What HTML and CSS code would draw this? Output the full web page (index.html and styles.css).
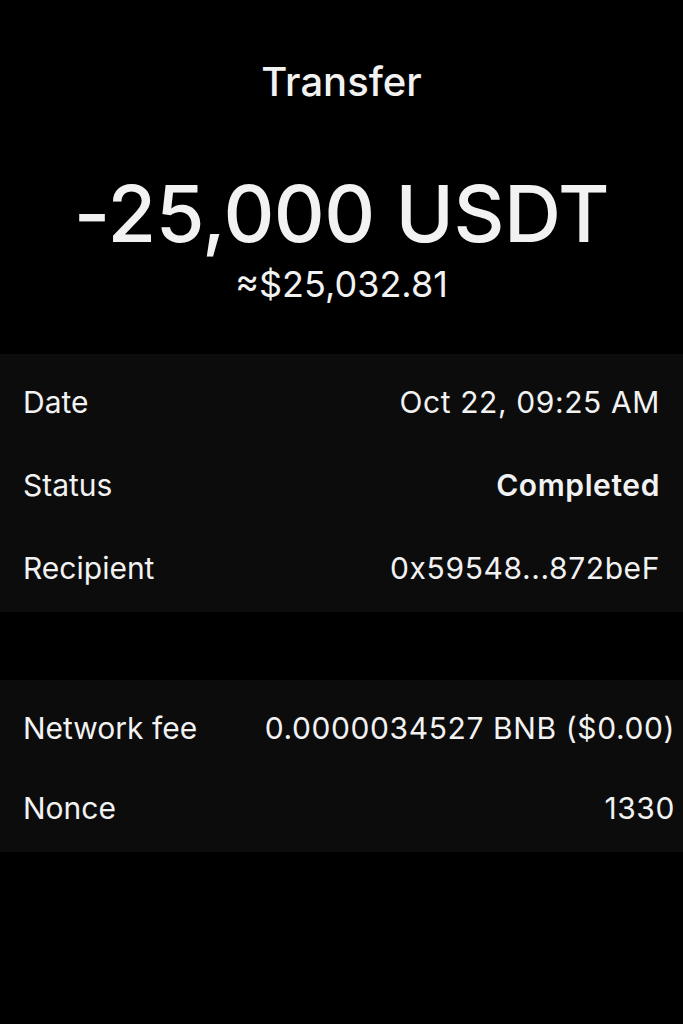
FILE: index.html
```html
<!DOCTYPE html>
<html lang="en">
<head>
    <meta charset="UTF-8">
    <meta name="viewport" content="width=device-width, initial-scale=1.0">
    <title>Transfer</title>
    <link rel="stylesheet" href="styles.css">
</head>
<body>
    <div class="header">
        <h1>Transfer</h1>
        <div class="amount">-25,000 USDT</div>
        <div class="fiat">≈$25,032.81</div>
    </div>

    <div class="card card-main">
        <div class="row">
            <span class="label">Date</span>
            <span class="value">Oct 22, 09:25 AM</span>
        </div>
        <div class="row">
            <span class="label">Status</span>
            <span class="value strong">Completed</span>
        </div>
        <div class="row">
            <span class="label">Recipient</span>
            <span class="value">0x59548...872beF</span>
        </div>
    </div>

    <div class="card card-extra">
        <div class="row row-short">
            <span class="label">Network fee</span>
            <span class="value">0.0000034527 BNB ($0.00)</span>
        </div>
        <div class="row row-short">
            <span class="label">Nonce</span>
            <span class="value">1330</span>
        </div>
    </div>
</body>
</html>
```

FILE: styles.css
```css
body {
    font-family: Inter, "Noto Sans", sans-serif;
    margin: 0;
    padding: 0;
    background-color: #000;
    color: #f2f2f2;
}

.header {
    display: flex;
    flex-direction: column;
    align-items: center;
    padding-top: 56px;
}

h1 {
    font-size: 40px;
    font-weight: 500;
    margin: 0;
    line-height: 52px;
}

.amount {
    font-size: 79px;
    font-weight: 500;
    line-height: 90px;
    margin-top: 60px;
    letter-spacing: -0.5px;
}

.fiat {
    font-size: 36px;
    line-height: 44px;
    margin-top: 4px;
}

.card {
    background-color: #0c0c0c;
}

.card-main {
    margin-top: 48px;
    padding: 6px 23px 3px;
}

.card-extra {
    margin-top: 68px;
    padding: 8px 8px 4px 23px;
}

.row {
    display: flex;
    justify-content: space-between;
    align-items: center;
    height: 83px;
    font-size: 30px;
}

.row-short {
    height: 80px;
}

.value {
    letter-spacing: 0.6px;
}

.value.strong {
    font-weight: 600;
}
```
